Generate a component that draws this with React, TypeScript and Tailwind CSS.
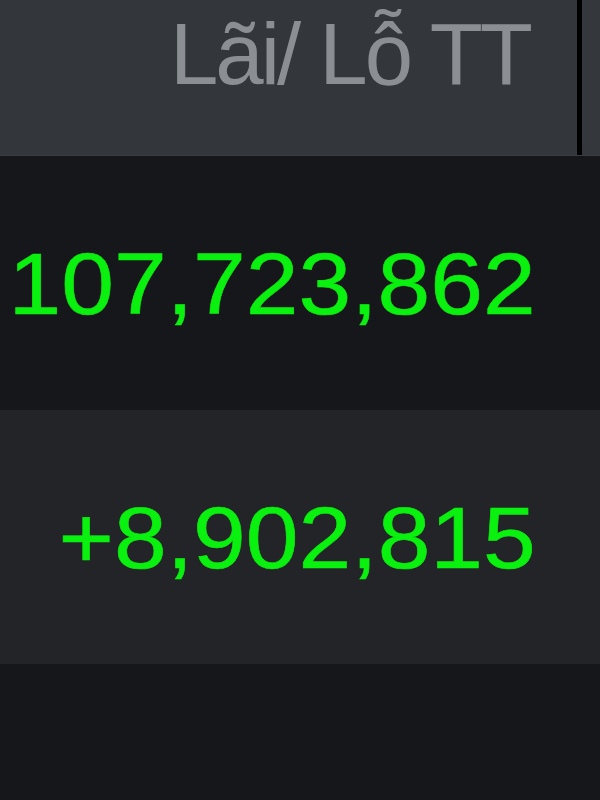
const rows = [
  { value: "107,723,862", bg: "bg-[#16171a]" },
  { value: "+8,902,815", bg: "bg-[#232427]" },
];

export default function App() {
  return (
    <div className="w-[600px] h-[800px] overflow-hidden bg-[#16171a] font-['Liberation_Sans',Arial,sans-serif]">
      {/* Header */}
      <div className="flex h-[156px] bg-[#33373b] border-b border-[#3a3e42]">
        <div className="w-[577px] flex justify-end items-start pt-[10px] pr-[47px]">
          <span className="text-[87px] leading-none tracking-[-3px] text-[#8b8f93] whitespace-nowrap">
            Lãi/ Lỗ TT
          </span>
        </div>
        <div className="w-[5px] bg-black" />
        <div className="flex-1 bg-[#34383c]" />
      </div>

      {rows.map((row) => (
        <div
          key={row.value}
          className={`flex h-[254px] items-center justify-end pr-[64px] ${row.bg}`}
        >
          <span className="inline-block origin-right scale-x-[1.09] text-[87px] leading-none text-[#0af00f] whitespace-nowrap [-webkit-text-stroke:0.6px_#0af00f]">
            {row.value}
          </span>
        </div>
      ))}
    </div>
  );
}
